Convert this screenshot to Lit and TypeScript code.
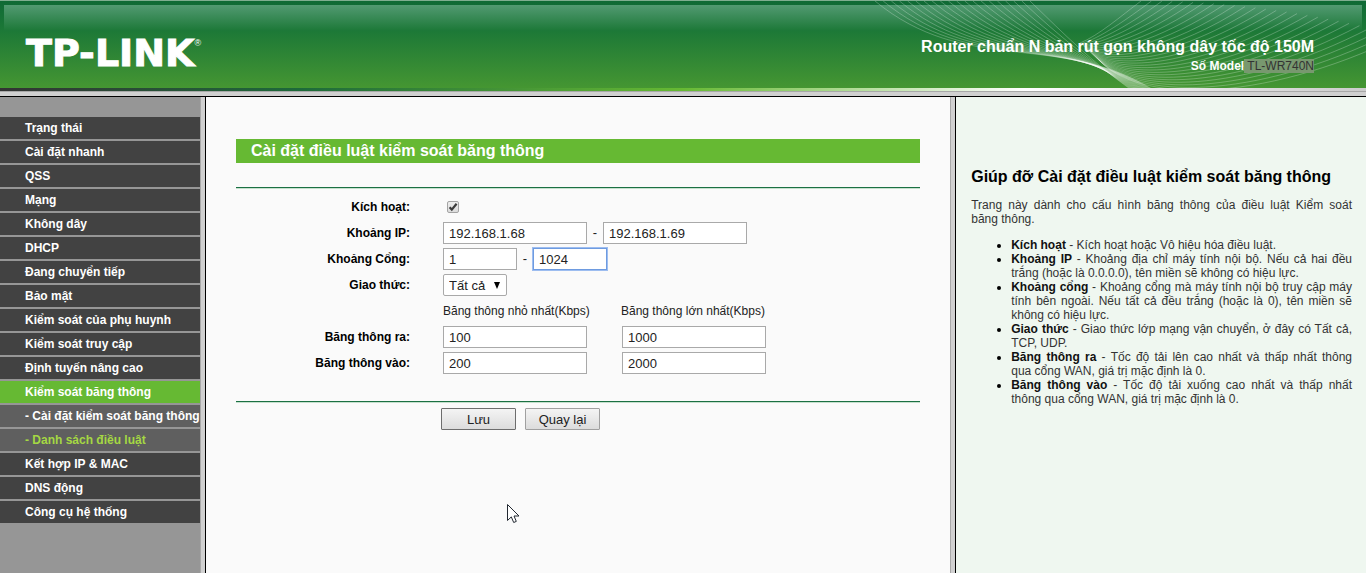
import { LitElement, html, svg, css } from "lit";
import { customElement } from "lit/decorators.js";
import { classMap } from "lit/directives/class-map.js";

interface MenuItem {
  label: string;
  kind?: "active" | "sub" | "current";
}

const MENU: MenuItem[] = [
  { label: "Trạng thái" },
  { label: "Cài đặt nhanh" },
  { label: "QSS" },
  { label: "Mạng" },
  { label: "Không dây" },
  { label: "DHCP" },
  { label: "Đang chuyển tiếp" },
  { label: "Bảo mật" },
  { label: "Kiểm soát của phụ huynh" },
  { label: "Kiểm soát truy cập" },
  { label: "Định tuyến nâng cao" },
  { label: "Kiểm soát băng thông", kind: "active" },
  { label: "- Cài đặt kiểm soát băng thông", kind: "sub" },
  { label: "- Danh sách điều luật", kind: "current" },
  { label: "Kết hợp IP & MAC" },
  { label: "DNS động" },
  { label: "Công cụ hệ thống" },
];

const HELP: [string, string][] = [
  ["Kích hoạt", "Kích hoạt hoặc Vô hiệu hóa điều luật."],
  ["Khoảng IP", "Khoảng địa chỉ máy tính nội bộ. Nếu cả hai đều trắng (hoặc là 0.0.0.0), tên miền sẽ không có hiệu lực."],
  ["Khoảng cổng", "Khoảng cổng mà máy tính nội bộ truy cập máy tính bên ngoài. Nếu tất cả đều trắng (hoặc là 0), tên miền sẽ không có hiệu lực."],
  ["Giao thức", "Giao thức lớp mạng vận chuyển, ở đây có Tất cả, TCP, UDP."],
  ["Băng thông ra", "Tốc độ tải lên cao nhất và thấp nhất thông qua\u00a0cổng WAN, giá trị mặc định là 0."],
  ["Băng thông vào", "Tốc độ tải xuống cao nhất và thấp nhất thông qua\u00a0cổng WAN, giá trị mặc định là 0."],
];

@customElement("router-banner")
class RouterBanner extends LitElement {
  static styles = css`
    :host {
      display: block;
      font-family: "Liberation Sans", Arial, sans-serif;
      color: #fff;
    }
    .banner {
      position: relative;
      display: flex;
      justify-content: space-between;
      height: 88px;
      overflow: hidden;
      box-sizing: border-box;
      border-top: 1px solid #7fae90;
      background: linear-gradient(#0f6a35, #1c7837 29px, #459632);
    }
    .shine {
      position: absolute;
      top: 4px;
      left: 4px;
      right: 4px;
      height: 26px;
      background: linear-gradient(#529a72, #1c7837);
    }
    .waves {
      position: absolute;
      top: 0;
      right: 0;
    }
    .logo {
      position: relative;
      display: flex;
      align-items: flex-start;
      padding: 30px 0 0 26px;
      font: bold 38px/44px "DejaVu Sans", sans-serif;
      -webkit-text-stroke: 1px #fff;
    }
    .mark {
      font: 9px/24px "Liberation Sans", sans-serif;
      -webkit-text-stroke: 0;
    }
    .title {
      position: relative;
      padding: 36px 52px 0 0;
      text-align: right;
      font-weight: bold;
    }
    .name {
      margin: 0;
      font-size: 16px;
      line-height: 20px;
    }
    .model {
      margin: 2px 0 0;
      font-size: 12px;
      line-height: 14px;
    }
    .selected {
      display: inline-block;
      font-weight: normal;
      white-space: pre;
      background: #78986f;
      color: #333;
    }
    .strip {
      height: 3px;
      background: linear-gradient(90deg, #333, #1d6a3a 22%, #66b933 50%, #fff 75%, #ccc);
    }
  `;

  private waves() {
    const left = Array.from({ length: 20 }, (_, i) => {
      const t = i / 19;
      return svg`<path d="M${164 - 155 * t} 0C${200 - 100 * t} ${35 + 40 * t} ${225 - 35 * t} ${60 - 30 * t} ${264 + 22 * t} 88"/>`;
    });
    const right = Array.from({ length: 26 }, (_, i) => {
      const t = i / 25;
      return svg`<path d="M${214 + 20 * t} ${42 + 18 * t}C${232 + 38 * t} ${35 + 65 * t} ${255 + 135 * t} ${15 + 90 * t} ${275 + 260 * t} ${35 * t * t}"/>`;
    });
    return svg`<g>${left}${right}</g>`;
  }

  render() {
    return html`
      <header class="banner">
        <div class="shine"></div>
        <svg class="waves" width="500" height="87" viewBox="0 0 500 87" fill="none" stroke="#fff" stroke-opacity="0.25" aria-hidden="true">${this.waves()}</svg>
        <div class="logo">TP-LINK<span class="mark">®</span></div>
        <div class="title">
          <p class="name">Router chuẩn N bản rút gọn không dây tốc độ 150M</p>
          <p class="model">Số Model<span class="selected"> TL-WR740N</span></p>
        </div>
      </header>
      <div class="strip"></div>
    `;
  }
}

@customElement("router-menu")
class RouterMenu extends LitElement {
  static styles = css`
    :host {
      display: block;
      padding-top: 20px;
      background: #969696;
      font: bold 12px/22px "Liberation Sans", Arial, sans-serif;
    }
    .list {
      display: grid;
      gap: 2px;
      margin: 0;
      padding: 0;
      list-style: none;
    }
    .link {
      display: block;
      padding-left: 25px;
      background: #424242;
      color: #fff;
      text-decoration: none;
      white-space: nowrap;
    }
    .active { background: #66b933; }
    .sub { background: #5f5f5f; }
    .current { color: #a5d843; }
  `;

  render() {
    return html`
      <nav>
        <ul class="list">
          ${MENU.map(({ label, kind }) => html`
            <li><a href="#" class=${classMap({
              link: true,
              active: kind === "active",
              sub: kind === "sub" || kind === "current",
              current: kind === "current",
            })}>${label}</a></li>`)}
        </ul>
      </nav>
    `;
  }
}

@customElement("bandwidth-form")
class BandwidthForm extends LitElement {
  static styles = css`
    :host {
      display: block;
      padding: 42px 30px 0;
      background: #fafafa;
      font: 12px/16px "Liberation Sans", Arial, sans-serif;
      color: #222;
    }
    .heading {
      margin: 0 0 24px;
      padding-left: 15px;
      background: #66b933;
      color: #fff;
      font-size: 16px;
      line-height: 24px;
    }
    .rule {
      height: 1px;
      background: #1b7043;
      border-bottom: 1px solid #c5e0cd;
    }
    .rows {
      display: grid;
      grid-auto-rows: 26px;
      padding: 5px 0 25px;
    }
    .row {
      display: grid;
      grid-template-columns: 174px 1fr;
      column-gap: 33px;
      align-items: center;
    }
    .caption {
      text-align: right;
      font-weight: bold;
      color: #000;
    }
    .fields {
      display: flex;
      align-items: center;
    }
    .dash {
      width: 16px;
      text-align: center;
      font-size: 13px;
    }
    .pair { gap: 35px; }
    .unit { width: 143px; white-space: nowrap; }
    .box {
      box-sizing: border-box;
      width: 144px;
      height: 22px;
      padding: 0 5px;
      border: 1px solid #a9a9a9;
      background: #fff;
      font: 13px "Liberation Sans", Arial, sans-serif;
      color: #222;
      outline: none;
    }
    .port { width: 74px; }
    .focused {
      border-color: #6e9be0;
      box-shadow: 0 0 0 1px #9dbdf0;
    }
    .check {
      display: grid;
      align-items: center;
    }
    .check > * { grid-area: 1 / 1; }
    .tick {
      appearance: none;
      box-sizing: border-box;
      width: 12px;
      height: 12px;
      margin: 0 4px;
      border: 1px solid #a4a4a4;
      border-radius: 2px;
      background: linear-gradient(#eee, #dcdcdc);
    }
    .glyph { margin-left: 4px; pointer-events: none; }
    .chooser { display: grid; align-items: center; }
    .chooser > * { grid-area: 1 / 1; }
    .select {
      appearance: none;
      width: 64px;
      border-radius: 2px;
    }
    .arrow { justify-self: end; margin-right: 7px; pointer-events: none; }
    .actions {
      display: flex;
      gap: 9px;
      padding: 5px 0 0 205px;
    }
    .button {
      box-sizing: border-box;
      width: 75px;
      height: 22px;
      padding: 0;
      border: 1px solid #a0a0a0;
      border-radius: 1px;
      background: linear-gradient(#f4f4f4, #dcdcdc);
      font: 13px "Liberation Sans", Arial, sans-serif;
      color: #222;
    }
    .primary { border-color: #6d6d6d; }
  `;

  render() {
    return html`
      <form>
        <h1 class="heading">Cài đặt điều luật kiểm soát băng thông</h1>
        <div class="rule"></div>
        <div class="rows">
          <div class="row">
            <label class="caption" for="enable">Kích hoạt:</label>
            <div class="fields"><span class="check">
              <input class="tick" id="enable" type="checkbox" checked />
              <svg class="glyph" width="12" height="12" viewBox="0 0 12 12" aria-hidden="true"><path d="M2.6 6.2l2.2 2.4L9.6 2.8" fill="none" stroke="#3c3c3c" stroke-width="2.2"/></svg>
            </span></div>
          </div>
          <div class="row">
            <label class="caption" for="ip-from">Khoảng IP:</label>
            <div class="fields">
              <input class="box" id="ip-from" type="text" value="192.168.1.68" />
              <span class="dash">-</span>
              <input class="box" type="text" aria-label="Khoảng IP" value="192.168.1.69" />
            </div>
          </div>
          <div class="row">
            <label class="caption" for="port-from">Khoảng Cổng:</label>
            <div class="fields">
              <input class="box port" id="port-from" type="text" value="1" />
              <span class="dash">-</span>
              <input class="box port focused" type="text" aria-label="Khoảng Cổng" value="1024" />
            </div>
          </div>
          <div class="row">
            <label class="caption" for="protocol">Giao thức:</label>
            <div class="fields"><span class="chooser">
              <select class="box select" id="protocol"><option>Tất cả</option></select>
              <svg class="arrow" width="6" height="7" viewBox="0 0 6 7" aria-hidden="true"><path d="M0 0h6L3 7z" fill="#000"/></svg>
            </span></div>
          </div>
          <div class="row">
            <span></span>
            <div class="fields pair">
              <span class="unit">Băng thông nhỏ nhất(Kbps)</span>
              <span class="unit">Băng thông lớn nhất(Kbps)</span>
            </div>
          </div>
          <div class="row">
            <label class="caption" for="out-min">Băng thông ra:</label>
            <div class="fields pair">
              <input class="box" id="out-min" type="text" value="100" />
              <input class="box" type="text" aria-label="Băng thông ra" value="1000" />
            </div>
          </div>
          <div class="row">
            <label class="caption" for="in-min">Băng thông vào:</label>
            <div class="fields pair">
              <input class="box" id="in-min" type="text" value="200" />
              <input class="box" type="text" aria-label="Băng thông vào" value="2000" />
            </div>
          </div>
        </div>
        <div class="rule"></div>
        <div class="actions">
          <button class="button primary" type="button">Lưu</button>
          <button class="button" type="button">Quay lại</button>
        </div>
      </form>
    `;
  }
}

@customElement("help-panel")
class HelpPanel extends LitElement {
  static styles = css`
    :host {
      display: block;
      padding: 70px 14px 0 15px;
      background: #eff7f0;
      font: 12px/14px "Liberation Sans", Arial, sans-serif;
      color: #333;
    }
    .heading {
      margin: 0;
      font-size: 16px;
      line-height: 20px;
      color: #000;
    }
    .intro {
      margin: 11px 0 12px;
      text-align: justify;
    }
    .list {
      margin: 0;
      padding-left: 40px;
      text-align: justify;
    }
    .list ::marker { color: #000; }
    .term { color: #111; }
  `;

  render() {
    return html`
      <h2 class="heading">Giúp đỡ Cài đặt điều luật kiểm soát băng thông</h2>
      <p class="intro">Trang này dành cho cấu hình băng thông của điều luật Kiểm soát băng\u00a0thông.</p>
      <ul class="list">
        ${HELP.map(([term, text]) => html`<li><b class="term">${term}</b> - ${text}</li>`)}
      </ul>
    `;
  }
}

@customElement("app-root")
class AppRoot extends LitElement {
  static styles = css`
    :host {
      display: flex;
      flex-direction: column;
      position: relative;
      min-height: 100vh;
    }
    .bar {
      height: 4px;
      border-top: 1px solid #a8a8a8;
      border-bottom: 1px solid #000;
      background: #d0d0d0;
    }
    .frames {
      flex: 1;
      display: grid;
      grid-template-columns: 200px 6px minmax(0, 1fr) 6px 30%;
    }
    .divider {
      box-sizing: border-box;
      border-left: 1px solid #a8a8a8;
      border-right: 1px solid #000;
      background: #d0d0d0;
    }
    .cursor {
      position: absolute;
      left: 507px;
      top: 504px;
    }
  `;

  render() {
    return html`
      <router-banner></router-banner>
      <div class="bar"></div>
      <main class="frames">
        <router-menu></router-menu>
        <div class="divider"></div>
        <bandwidth-form></bandwidth-form>
        <div class="divider"></div>
        <help-panel></help-panel>
      </main>
      <svg class="cursor" width="13" height="20" viewBox="0 0 13 20" aria-hidden="true">
        <path d="M.5.5v16l3.8-3.6 2.4 5.6 2.6-1.1L7 12h5z" fill="#fff" stroke="#222831"/>
      </svg>
    `;
  }
}
